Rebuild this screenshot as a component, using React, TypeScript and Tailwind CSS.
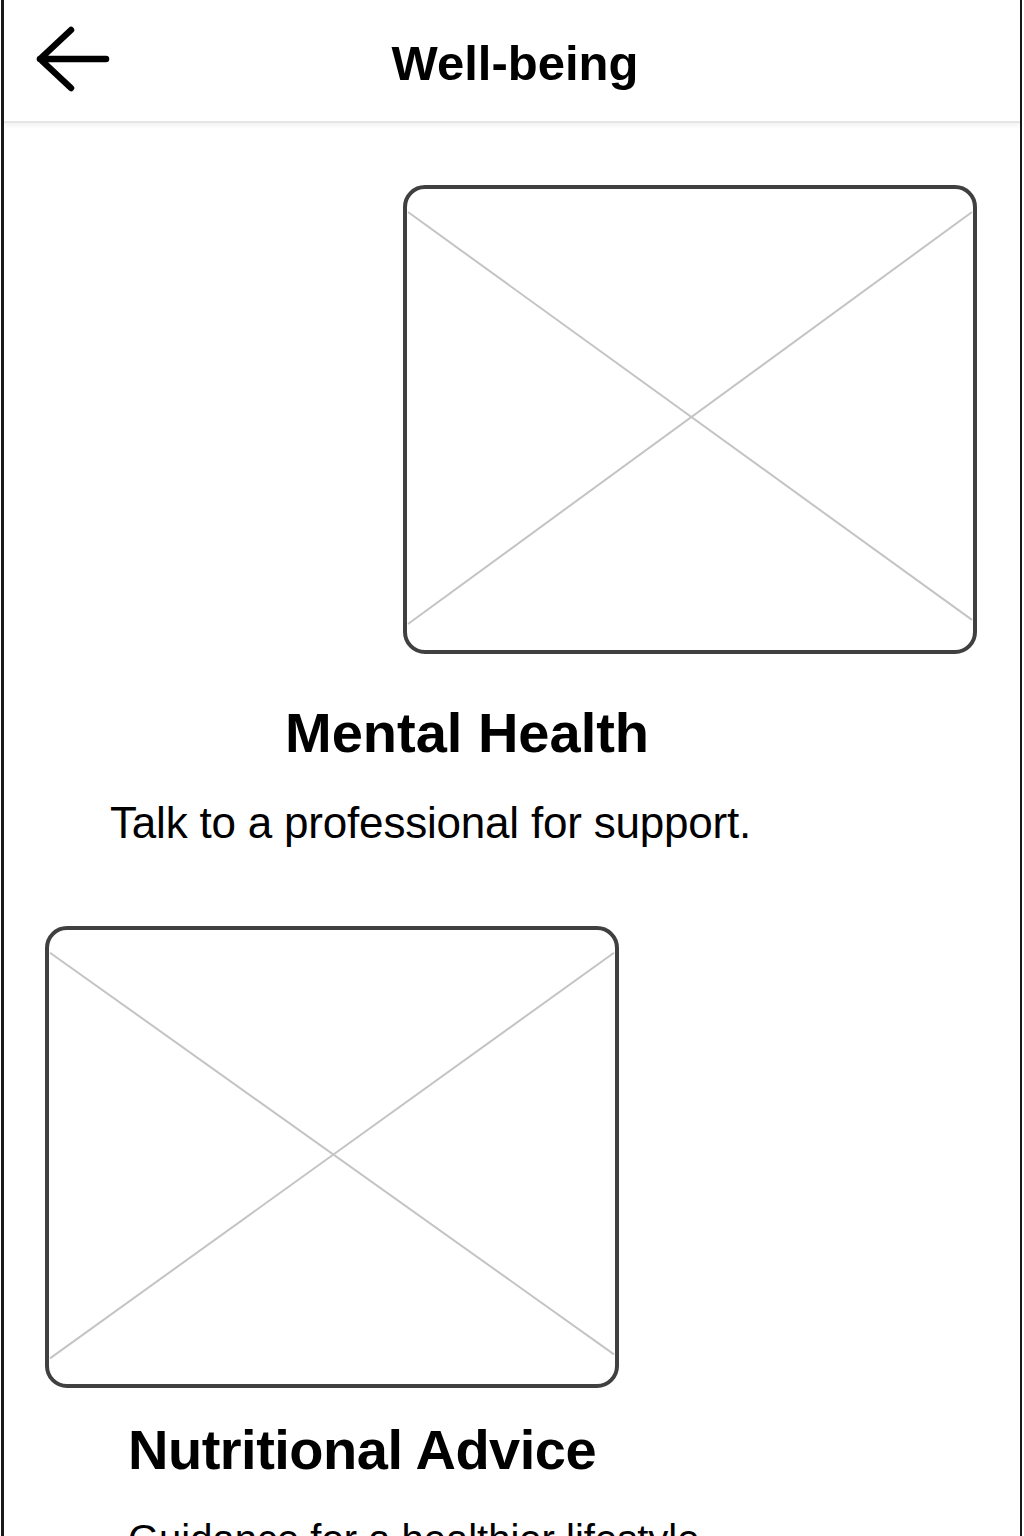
import React from "react";

function Placeholder({ className }: { className: string }) {
  return (
    <div className={`relative rounded-[22px] border-4 border-[#404040] bg-white ${className}`}>
      <svg className="absolute inset-0 h-full w-full" viewBox="0 0 568 460" preserveAspectRatio="none">
        <line x1="1" y1="23" x2="567" y2="430" stroke="#c4c4c4" strokeWidth="2" />
        <line x1="567" y1="23" x2="1" y2="434" stroke="#c4c4c4" strokeWidth="2" />
      </svg>
    </div>
  );
}

export default function App() {
  return (
    <div
      className="h-[1536px] w-[1024px] overflow-hidden bg-white text-black"
      style={{ fontFamily: '"Liberation Sans", Arial, sans-serif' }}
    >
      <div className="ml-px h-full w-[1021px] border-l-[3px] border-r-2 border-[#1a1a1a]">
        <header className="grid h-[123px] grid-cols-[1fr_auto_1fr] items-center border-b-2 border-[#e6e6e6] shadow-[0_3px_4px_rgba(0,0,0,0.05)]">
          <div className="pl-[32px] pb-[4px]">
            <svg width="74" height="66" viewBox="0 0 74 66" fill="none">
              <path
                d="M35 4 L4 33 L35 62 M4 33 H70"
                stroke="#000"
                strokeWidth="6.5"
                strokeLinecap="round"
                strokeLinejoin="round"
              />
            </svg>
          </div>
          <h1 className="pt-[6px] pl-[6px] text-[49px] font-bold leading-none">Well-being</h1>
          <div />
        </header>

        <main className="px-[40px]">
          <section className="pt-[62px]">
            <div className="flex justify-end pr-[3px]">
              <Placeholder className="h-[469px] w-[574px]" />
            </div>
            <h2 className="mt-[51px] pl-[241px] text-[56px] font-bold leading-none">Mental Health</h2>
            <p className="mt-[40px] pl-[66px] text-[44px] leading-none tracking-[-0.2px]">
              Talk to a professional for support.
            </p>
          </section>

          <section className="pt-[81px]">
            <div className="flex justify-start pl-[1px]">
              <Placeholder className="h-[462px] w-[574px]" />
            </div>
            <h2 className="mt-[34px] pl-[84px] text-[56px] font-bold leading-none tracking-[-0.5px]">
              Nutritional Advice
            </h2>
            <p className="mt-[41px] pl-[84px] text-[40px] leading-none">
              Guidance for a healthier lifestyle.
            </p>
          </section>
        </main>
      </div>
    </div>
  );
}
